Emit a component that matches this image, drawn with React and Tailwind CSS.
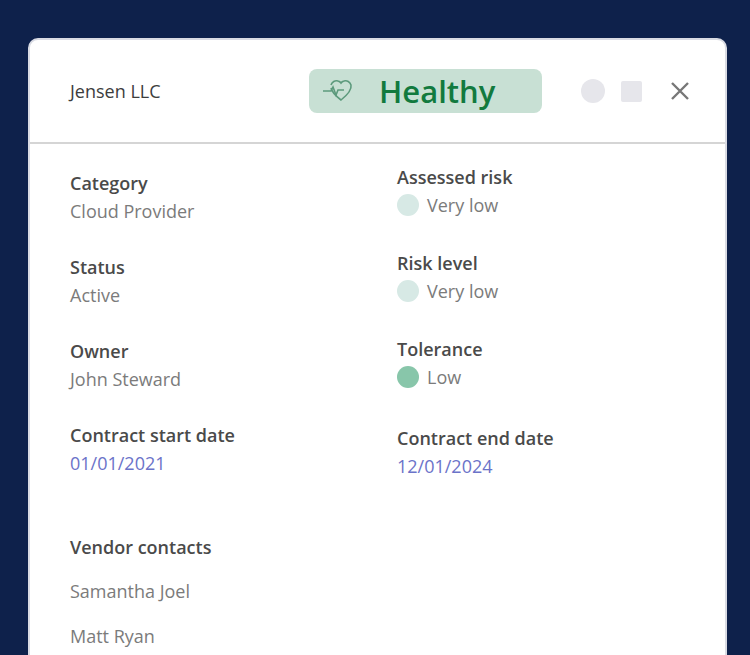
export default function App() {
  const font = { fontFamily: '"Open Sans", sans-serif' };
  const L = ({ label, value, cls = "text-[#7b7b7b]" }) => (
    <div className="flex flex-col">
      <div className="text-[18px] font-semibold text-[#4a4a4a] leading-[26px]">{label}</div>
      <div className={`text-[18px] leading-[30px] ${cls}`}>{value}</div>
    </div>
  );
  const R = ({ label, value, dot }) => (
    <div className="flex flex-col">
      <div className="text-[18px] font-semibold text-[#4a4a4a] leading-[26px]">{label}</div>
      <div className="flex items-center gap-[8px] text-[18px] leading-[30px] text-[#7b7b7b]">
        <span className="w-[22px] h-[22px] rounded-full" style={{ background: dot }} />
        {value}
      </div>
    </div>
  );
  return (
    <div className="w-[750px] h-[655px] bg-[#0e214b] overflow-hidden pt-[38px] pl-[28px]" style={font}>
      <div className="w-[699px] h-[640px] bg-white rounded-[10px] border-2 border-[#d9dbe3]">
        <div className="h-[104px] flex items-center border-b-2 border-[#d5d5d5] pl-[40px] pr-[22px]">
          <div className="text-[18px] text-[#3d3d3d] w-[239px]">Jensen LLC</div>
          <div className="w-[233px] h-[44px] rounded-[8px] bg-[#c8e0d4] flex items-center pl-[12px]">
            <svg width="34" height="26" viewBox="0 0 34 26" fill="none" stroke="#5c9a7c" strokeWidth="1.6">
              <path d="M10 7c1-3 4-5 7-4 2 .5 3 2 3 2s1-1.5 3-2c3-1 6 1 7 4 1 5-5 11-10 15C16 19 11 14 10 10" />
              <path d="M2 13h8l2-4 3 8 2-5h6" />
            </svg>
            <span className="ml-[24px] text-[31px] font-semibold text-[#127a3e] leading-none">Healthy</span>
          </div>
          <div className="w-[24px] h-[24px] rounded-full bg-[#e6e6eb] ml-[39px]" />
          <div className="w-[21px] h-[21px] bg-[#e6e6eb] ml-[16px] rounded-[2px]" />
          <svg className="ml-[28px]" width="20" height="20" viewBox="0 0 20 20" stroke="#777" strokeWidth="2.4">
            <path d="M2 2l16 16M18 2L2 18" />
          </svg>
        </div>
        <div className="flex pl-[40px]">
          <div className="w-[327px] flex flex-col gap-[28px] pt-[26px]">
            <L label="Category" value="Cloud Provider" />
            <L label="Status" value="Active" />
            <L label="Owner" value="John Steward" />
            <L label="Contract start date" value="01/01/2021" cls="text-[#6b73c9]" />
            <div className="flex flex-col mt-[28px]">
              <div className="text-[18px] font-semibold text-[#4a4a4a] leading-[26px]">Vendor contacts</div>
              <div className="text-[18px] text-[#7b7b7b] mt-[18px] leading-[26px]">Samantha Joel</div>
              <div className="text-[18px] text-[#7b7b7b] mt-[19px] leading-[26px]">Matt Ryan</div>
            </div>
          </div>
          <div className="flex flex-col gap-[30px] pt-[20px]">
            <R label="Assessed risk" value="Very low" dot="#d7e9e5" />
            <R label="Risk level" value="Very low" dot="#d7e9e5" />
            <R label="Tolerance" value="Low" dot="#88c6aa" />
            <div className="mt-[3px]"><L label="Contract end date" value="12/01/2024" cls="text-[#6b73c9]" /></div>
          </div>
        </div>
      </div>
    </div>
  );
}
